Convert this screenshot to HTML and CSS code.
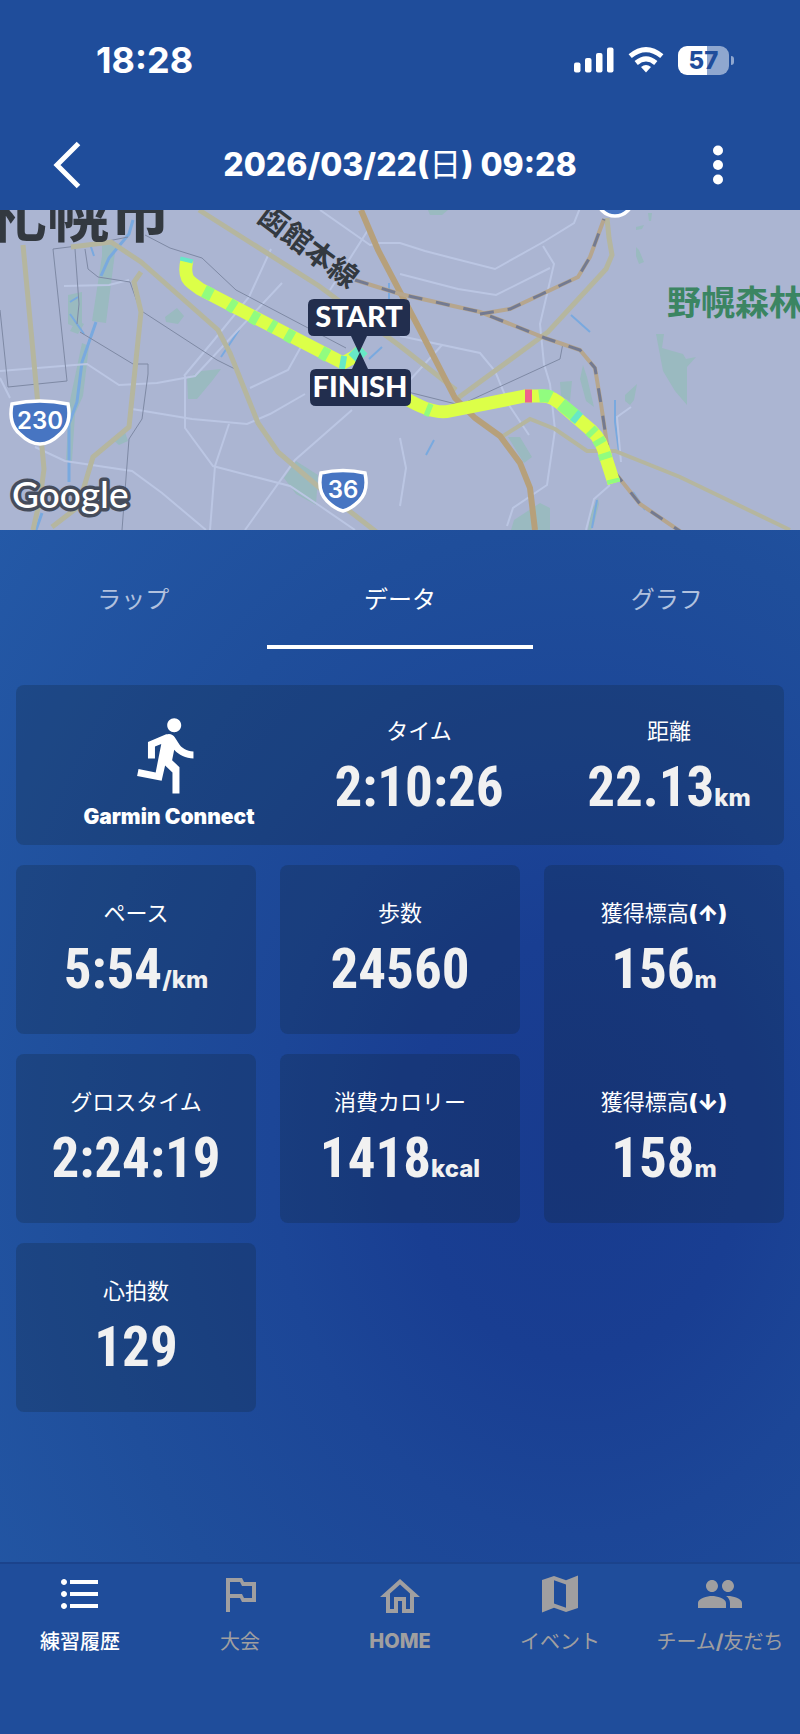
FILE: index.html
```html
<!DOCTYPE html>
<html lang="ja">
<head>
<meta charset="utf-8">
<meta name="viewport" content="width=device-width, initial-scale=1">
<title>練習履歴</title>
<link rel="stylesheet" href="styles.css">
</head>
<body>
<div class="app">
  <div class="status">
    <span class="clock">18:28</span>
    <div class="status-icons">
      <svg width="40" height="26" viewBox="0 0 40 26" fill="#fff" aria-hidden="true">
        <rect x="0" y="15.500" width="6.500" height="10" rx="2"/><rect x="11" y="11" width="6.500" height="14.500" rx="2"/><rect x="22" y="6" width="6.500" height="19.500" rx="2"/><rect x="33" y="0.500" width="6.500" height="25" rx="2"/>
      </svg>
      <svg width="36" height="26" viewBox="0 0 36 26" aria-hidden="true">
        <g fill="none" stroke="#fff" stroke-width="5"><path d="M2.200 9.200Q18 -4 33.800 9.200"/><path d="M8.200 16Q18 7.800 27.800 16"/></g>
        <path d="M18 25.500l-5-5.500q5-4 10 0z" fill="#fff"/>
      </svg>
      <div class="battery"><span>57</span></div>
    </div>
  </div>
  <header class="header">
    <button class="icon-btn" aria-label="戻る"><svg width="60" height="48" viewBox="0 0 60 48" fill="none" stroke="#fff" stroke-width="5"><path d="M26.500 2.500L5 24l21.500 21.500"/></svg></button>
    <h1>2026/03/22(<span>日</span>) 09:28</h1>
    <button class="icon-btn" aria-label="メニュー"><svg width="60" height="48" viewBox="0 0 60 48" fill="#fff"><circle cx="30" cy="9.500" r="5"/><circle cx="30" cy="24" r="5"/><circle cx="30" cy="38.500" r="5"/></svg></button>
  </header>

  <svg class="map" viewBox="0 0 800 320" role="img" aria-label="コースマップ">
    <rect width="800" height="320" fill="#abb5d2"/>
    <g fill="#9abac0">
      <path d="M102 35h14l-10 78-14-2 10-65z"/><path d="M68 85l14-3v38l-14-6zM76 110l8 4-6 10-8-3z"/>
      <path d="M82 133l7 3-6 50-8 18-3 47h-6l3-56z"/>
      <path d="M165 107l12-9 7 8-6 8-12-2zM187 168l14-7 20-2-9 12-15 18-9 0zM112 229l12-10 4 12-9 4z"/>
      <path d="M284 268l12-17 22 14-2 30-20-11z"/><path d="M428 0h20l-6 5h-12zM511 320l3-10 26-17 10 5v22z"/>
      <path d="M508 227l12 0 12 20-8 6zM560 172l12-1-2 20-9-5zM583 155l4 12 7 30-8-6-6-22zM625 185l12-11-3 16-4 5-5-4z"/>
      <path d="M656 124h8l-2 14 21 6 3 5 10-2-9 10v38l-12-14-12-20z"/><path d="M636 17l8-2-2 4-6 1zM636 37l3 3 5 12-5 2-3-8zM648 3h4l-1 8h-2zM588 320l3-18 7-14 1 6-5 20-3 6z"/>
    </g>
    <g fill="none" stroke="#79a9df" stroke-width="3">
      <path d="M133 10l-4 14-20 24-8 18M96 112L82 152l-5 40-8 22v58M42 303l-6 17"/><path d="M70 104l14 20M90 34l4 12M70 92l8-5" stroke-width="2"/>
      <path d="M239 120l-18 27M382 137l-13 12M389 73v18M571 105l19 17M615 190v22l4 30M434 230l-8 15M633 282l12 18M597 290l-5 28" stroke-width="2"/>
    </g>
    <g fill="none" stroke="#bbc6e3" stroke-width="2">
      <path d="M0 161l87-7 32 21 38-2 38-7 87-93"/><path d="M64 76l45-1 20-5M0 168l10 20M35 237l30 14 67 10 30 22 44 37"/>
      <path d="M132 199l60 10 55 5 23-10 35-20M185 166v52l28 38 77 20 30 20 35 24M184 166l30-36 35-43 22-48"/>
      <path d="M245 320l50-70 57-50M229 214l-14 42-5 64M250 178l38-18 14-25"/>
      <path d="M320 0l50 35 10-2h20l25 8 27 7 43 11 50-28 29-18 6-15M400 64l58 15 38 6 54-27M543 36l11 18-14 60 4 40 6 20 5 46-8 55-34 23-6 18"/>
      <path d="M330 80l38-60M400 126l80 17 15 18 14 34 20 30M442 135l-32 35M400 228l6 30-6 38M631 197l-14 10 4 45M610 275l-16 14-8 31"/>
    </g>
    <g fill="none" stroke="#7e89a4" stroke-width="1">
      <path d="M53 39l40-5 35-7M53 39l14 132-59 6L0 100M75 39l4 55-2 20M85 39l3 20 10 8 32 5 10 28 77 50 20 10M80 122l53 32h15v10l-6 45-13 20-7 91M145 25l25 13 32 10L236 80l110 58M400 180l60 15 100-46 3-16"/>
    </g>
    <g fill="none" stroke="#b5b69f" stroke-width="5">
      <path d="M23 35l15 160 6 64-4 30-7 31M71 37l40-5 30 20 77 68 12 23 28 70 20 29 43 37 80 62"/><path d="M141 62l-7 10 7 30-12 115-36 30-15 50-26 20"/>
      <path d="M199 0l120 76 81 60 56 44"/><path d="M607 8l2 20 3 17-6 14-58 63-90 66"/><path d="M500 228l30-19 25 10 32 22h28l65 26 110 53" stroke-width="4"/>
    </g>
    <path d="M361 0l17 40 42 80 35 68 20 20 25 18 20 27 10 25 5 42" fill="none" stroke="#b6a07b" stroke-width="6"/>
    <g fill="none">
      <path d="M355 70l45 14 80 18 65 26 35 12 15 18 6 36 6 40 5 25 28 35 53 36M480 104l30-5 30-14 38-18 12-20 14-38" stroke="#b6a68e" stroke-width="4"/>
      <path d="M355 70l45 14 80 18 65 26 35 12 15 18 6 36 6 40 5 25 28 35 53 36M480 104l30-5 30-14 38-18 12-20 14-38" stroke="#737a91" stroke-width="3" stroke-dasharray="14 14"/>
    </g>
    <g fill="none" stroke="#dcff48" stroke-width="13">
      <path d="M187 50q-4 17 5 23l8 6 143 74 11-6 9-8M405 188q28 17 45 13l75-15h15q12-1 24 11l28 24q10 9 14 27l8 25"/>
      <g stroke="#91fc7f"><path d="M204 81l8 4M229 94l6 4M251 106l7 4M270 115l5 3M286 124l7 4M321 142l7 4M426 199l5 2M539 186q8-1 12 1M561 194l16 13M590 220l4 4M598 229l3 5M604 243l2 6M613 269l1 4"/></g>
      <g stroke="#67e8c7"><path d="M186 52l1-4M340 152l6 1M353 149l10-10M574 205l5 4"/></g>
      <path d="M525 186h7" stroke="#f0628b"/>
    </g>
    <g class="map-names">
      <text x="-15" y="27" class="city">札幌市</text>
      <text x="256" y="10" transform="rotate(37 256 10)" class="line">函館本線</text>
      <text x="667" y="105" class="forest">野幌森林</text>
    </g>
    <g fill="#4775c2" stroke="#fff" stroke-width="3.500">
      <path d="M12 194q28-6 56 0 4 20-8 30-10 10-20 10t-20-10q-12-10-8-30z"/>
      <path d="M321 263q22-5 44 0 4 18-6 28-8 8-16 10-8-2-16-10-10-10-6-28z"/>
      <circle cx="615" cy="-12" r="18"/>
    </g>
    <g class="shield"><text x="40" y="219">230</text><text x="343" y="288">36</text></g>
    <text x="12" y="298" class="google">Google</text>
    <g fill="#222e4e">
      <path d="M314 89h90q6 0 6 6v25q0 6-6 6h-37l-8 17-8-17h-37q-6 0-6-6V95q0-6 6-6z"/>
      <path d="M316 159h36l8-17 8 17h37q6 0 6 6v25q0 6-6 6h-89q-6 0-6-6v-25q0-6 6-6z"/>
    </g>
    <g class="pin"><text x="359" y="117">START</text><text x="360" y="187">FINISH</text></g>
  </svg>

  <main class="main">
    <div class="tabs" role="tablist">
      <button class="tab" role="tab" aria-selected="false">ラップ</button>
      <button class="tab" role="tab" aria-selected="true">データ</button>
      <button class="tab" role="tab" aria-selected="false">グラフ</button>
    </div>
    <section class="stats">
      <div class="card summary">
        <div class="source">
          <svg width="84" height="84" viewBox="0 0 24 24" fill="#fff" aria-hidden="true"><path d="M13.490 5.480c1.100 0 2-.9 2-2s-.9-2-2-2-2 .9-2 2 .9 2 2 2zm-3.600 13.900l1-4.400 2.100 2v6h2v-7.500l-2.100-2 .6-3c1.300 1.500 3.300 2.500 5.500 2.500v-2c-1.900 0-3.500-1-4.300-2.400l-1-1.600c-.4-.6-1-1-1.700-1-.3 0-.5.1-.8.1l-5.200 2.200v4.700h2v-3.400l1.800-.7-1.600 8.100-4.900-1-.4 2 7 1.400z"/></svg>
          <span>Garmin Connect</span>
        </div>
        <div class="stat"><h2>タイム</h2><p>2:10:26</p></div>
        <div class="stat"><h2>距離</h2><p>22.13<small>km</small></p></div>
      </div>
      <div class="card stat"><h2>ペース</h2><p>5:54<small>/km</small></p></div>
      <div class="card stat"><h2>歩数</h2><p>24560</p></div>
      <div class="card elevation">
        <div class="stat"><h2>獲得標高<b>(↑)</b></h2><p>156<small>m</small></p></div>
        <div class="stat"><h2>獲得標高<b>(↓)</b></h2><p>158<small>m</small></p></div>
      </div>
      <div class="card stat"><h2>グロスタイム</h2><p>2:24:19</p></div>
      <div class="card stat"><h2>消費カロリー</h2><p>1418<small>kcal</small></p></div>
      <div class="card stat"><h2>心拍数</h2><p>129</p></div>
    </section>
  </main>

  <nav class="nav">
    <a href="#history" class="on" aria-current="page"><svg viewBox="0 0 24 24"><path d="M4 10.500c-.83 0-1.500.67-1.500 1.500s.67 1.500 1.500 1.500 1.500-.67 1.500-1.500-.67-1.500-1.500-1.500zm0-6c-.83 0-1.500.67-1.500 1.500S3.170 7.500 4 7.500 5.500 6.830 5.500 6 4.830 4.500 4 4.500zm0 12c-.83 0-1.500.68-1.500 1.500s.68 1.500 1.500 1.500 1.500-.68 1.500-1.500-.67-1.500-1.500-1.500zM7 19h14v-2H7v2zm0-6h14v-2H7v2zm0-8v2h14V5H7z"/></svg><span>練習履歴</span></a>
    <a href="#race"><svg viewBox="0 0 24 24"><path d="M14 6l-1-2H5v17h2v-7h5l1 2h7V6h-6zm4 8h-4l-1-2H7V6h5l1 2h5v6z"/></svg><span>大会</span></a>
    <a href="#home"><svg viewBox="0 0 24 24"><path d="M12 5.690l5 4.500V18h-2v-6H9v6H7v-7.810l5-4.500M12 3L2 12h3v8h6v-6h2v6h6v-8h3L12 3z"/></svg><span>HOME</span></a>
    <a href="#event"><svg viewBox="0 0 24 24"><path d="M15 5.100L9 3 3 5.020v16.200l6-2.330 6 2.100 6-2.020V2.770L15 5.100zm0 13.790l-6-2.110V5.110l6 2.110v11.670z"/></svg><span>イベント</span></a>
    <a href="#team"><svg viewBox="0 0 24 24"><path d="M16 11c1.660 0 2.990-1.340 2.990-3S17.660 5 16 5c-1.660 0-3 1.340-3 3s1.340 3 3 3zm-8 0c1.660 0 2.990-1.340 2.990-3S9.660 5 8 5C6.340 5 5 6.340 5 8s1.340 3 3 3zm0 2c-2.330 0-7 1.170-7 3.500V19h14v-2.500c0-2.330-4.670-3.500-7-3.500zm8 0c-.29 0-.62.02-.97.05 1.160.84 1.970 1.970 1.970 3.450V19h6v-2.500c0-2.330-4.670-3.500-7-3.500z"/></svg><span>チーム<b>/</b>友だち</span></a>
  </nav>
</div>
</body>
</html>
```
FILE: styles.css
```css
* { box-sizing: border-box; }

body {
  margin: 0;
  background: #1f4d9b;
  color: #fff;
  font-family: Inter, "Noto Sans CJK JP", sans-serif;
}

h1, h2, p { margin: 0; }

button {
  padding: 0;
  border: 0;
  background: none;
  color: inherit;
  font: inherit;
}

svg { display: block; }

.app {
  display: flex;
  flex-direction: column;
  min-height: 100vh;
}

.status {
  display: flex;
  align-items: center;
  justify-content: space-between;
  height: 120px;
  padding: 0 66px 0 96px;
}

.clock {
  font-size: 36px;
  font-weight: 700;
}

.status-icons {
  display: flex;
  align-items: center;
  gap: 14px;
}

.battery {
  position: relative;
  display: flex;
  align-items: center;
  justify-content: center;
  width: 51px;
  height: 29px;
  margin-right: 5px;
  border-radius: 9px;
  background: linear-gradient(90deg, #fff 57%, #8fa7cf 57%);
  color: #1f4d9b;
  font-size: 24px;
  font-weight: 800;
}

.battery::after {
  content: "";
  position: absolute;
  right: -5px;
  width: 3px;
  height: 9px;
  border-radius: 0 3px 3px 0;
  background: #8fa7cf;
}

.header {
  display: flex;
  align-items: center;
  justify-content: space-between;
  height: 90px;
  padding: 0 52px;
}

h1 {
  font-size: 32px;
  font-weight: 800;
  line-height: 42px;
}

h1 span { font-weight: 400; }

.map {
  width: 100%;
  height: auto;
}

.map-names {
  font-family: "Noto Sans CJK JP", sans-serif;
  font-weight: 700;
  fill: #333940;
}

.city { font-size: 62px; }
.line { font-size: 29px; stroke: #abb5d2; stroke-width: 2px; paint-order: stroke; }
.forest { font-size: 34px; fill: #3b8562; }

.shield {
  font-size: 24px;
  font-weight: 600;
  fill: #fff;
  text-anchor: middle;
}

.google {
  font-family: Lato, sans-serif;
  font-size: 37px;
  font-weight: 500;
  fill: #fff;
  stroke: #454c5c;
  stroke-width: 7px;
  stroke-linejoin: round;
  paint-order: stroke;
}

.pin {
  font-family: Lato, sans-serif;
  font-size: 29px;
  font-weight: 900;
  fill: #fff;
  text-anchor: middle;
}

.main {
  flex: 1;
  background: radial-gradient(ellipse 760px 960px at 72% 60%, #183b8e 0%, #193e92 22%, #1c4697 40%, #1f4e9b 65%, #2459a7 100%);
}

.tabs { display: grid; grid-template-columns: repeat(3, 1fr); }

.tab {
  padding: 52px 0 27px;
  border-bottom: 4px solid transparent;
  color: #b1c1de;
  font-size: 24px;
  line-height: 36px;
}

.tab[aria-selected="true"] {
  border-color: #fff;
  color: #fff;
}

.stats {
  display: grid;
  grid-template-columns: repeat(3, 1fr);
  gap: 20px 24px;
  padding: 36px 16px;
}

.card {
  border-radius: 8px;
  background: rgba(18, 32, 48, 0.24);
}

.summary {
  display: grid;
  grid-column: 1 / -1;
  grid-template-columns: 230fr 270fr 230fr;
  height: 160px;
  padding-left: 38px;
}

.source {
  display: flex;
  flex-direction: column;
  align-items: center;
  padding-top: 28px;
  font-size: 21px;
  font-weight: 900;
  line-height: 40px;
}

.stat {
  height: 169px;
  padding-top: 32px;
  text-align: center;
}

.summary .stat { padding-top: 30px; height: auto; }

.stat h2 {
  font-size: 22px;
  font-weight: 400;
  line-height: 32px;
}

.stat h2 b { font-weight: 900; }

.stat p {
  margin-top: 12px;
  color: #f1f1f1;
  font-family: "Roboto Condensed", "Liberation Sans Narrow", Roboto, sans-serif;
  font-size: 55px;
  font-weight: 700;
  line-height: 56px;
}

.stat small {
  font-family: Inter, sans-serif;
  font-size: 24px;
  font-weight: 800;
}

.elevation {
  display: flex;
  flex-direction: column;
  grid-row: span 2;
  gap: 20px;
}

.nav {
  display: grid;
  grid-template-columns: repeat(5, 1fr);
  height: 172px;
  padding: 6px 0 80px;
  border-top: 2px solid #1b438c;
}

.nav a {
  display: flex;
  flex-direction: column;
  align-items: center;
  justify-content: center;
  gap: 8px;
  color: #a09fa0;
  font-size: 20px;
  text-decoration: none;
  white-space: nowrap;
}

.nav a:nth-child(3) { font-weight: 800; }
.nav .on { color: #fff; font-weight: 500; }

.nav svg {
  width: 48px;
  height: 48px;
  fill: currentColor;
}
```
